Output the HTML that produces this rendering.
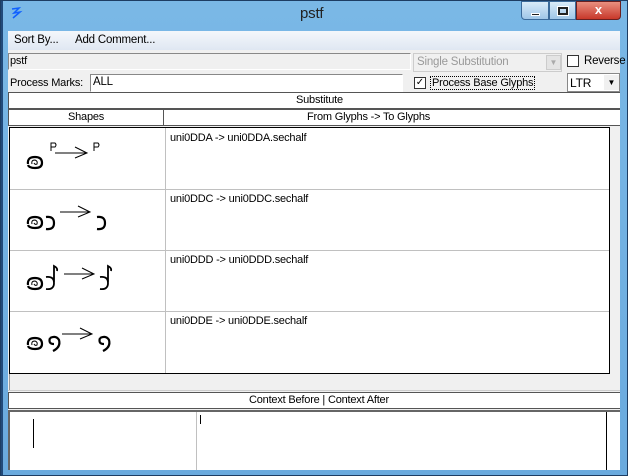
<!DOCTYPE html>
<html><head><meta charset="utf-8"><style>
*{margin:0;padding:0;box-sizing:border-box}
body{width:628px;height:476px;overflow:hidden;background:#6eaee0;font-family:"Liberation Sans",sans-serif;font-size:11px;color:#000;position:relative}
.a{position:absolute}
.t{white-space:nowrap;letter-spacing:-0.2px}
</style></head><body>
<div class="a" style="left:0;top:0;width:628px;height:476px;border:1px solid #1d3d63;background:linear-gradient(#7ab8e6,#6aaade)"></div>
<div class="a" style="left:1px;top:1px;width:2px;height:474px;background:#214a7a"></div>
<svg class="a" style="left:9px;top:6px" width="14" height="14"><path d="M3 3 L10 2 L5 7 L11 6 L4 12" stroke="#1060ff" stroke-width="1.5" fill="none"/></svg>
<div class="a t" style="left:300px;top:5px;font-size:15px;color:#222">pstf</div>
<div class="a" style="left:521px;top:1px;width:28px;height:19px;border:1px solid #3a6a9a;background:linear-gradient(#d9ebf8,#9fc6e8);border-radius:0 0 0 4px"><div class="a" style="left:9px;top:11px;width:9px;height:3px;background:#222;border:1px solid #fff"></div></div>
<div class="a" style="left:549px;top:1px;width:27px;height:19px;border:1px solid #3a6a9a;background:linear-gradient(#d9ebf8,#9fc6e8)"><div class="a" style="left:8px;top:5px;width:10px;height:8px;border:2px solid #222;outline:1px solid #fff"></div></div>
<div class="a" style="left:576px;top:1px;width:45px;height:19px;border:1px solid #6a2020;background:linear-gradient(#e89080,#c8382a);border-radius:0 0 4px 0;color:#fff;font-weight:bold;font-size:13px;text-align:center;line-height:16px">x</div>
<div class="a" style="left:8px;top:31px;width:612px;height:439px;background:#f0f0f0"></div>
<div class="a" style="left:8px;top:31px;width:612px;height:19px;background:linear-gradient(#f4f7fb,#dfe7f2)"></div>
<div class="a t" style="left:14px;top:34px;font-size:11.5px">Sort By...</div>
<div class="a t" style="left:75px;top:34px;font-size:11.5px">Add Comment...</div>
<div class="a" style="left:8px;top:53px;width:403px;height:17px;border:1px solid #888;border-right-color:#fff;border-bottom-color:#fff;background:#f0f0f0"></div>
<div class="a t" style="left:10px;top:55px">pstf</div>
<div class="a" style="left:413px;top:53px;width:149px;height:19px;border:1px solid #ccc;background:#f0f0f0"></div>
<div class="a t" style="left:417px;top:56px;font-size:11.5px;color:#999">Single Substitution</div>
<div class="a" style="left:546px;top:55px;width:15px;height:15px;background:#e4e4e4;border:1px solid #ccc;color:#aaa;font-size:8px;text-align:center;line-height:14px">▼</div>
<div class="a" style="left:567px;top:55px;width:12px;height:12px;border:1px solid #333;background:#fff"></div>
<div class="a t" style="left:584px;top:55px;font-size:11.5px">Reverse</div>
<div class="a t" style="left:10px;top:77px;font-size:11px">Process Marks:</div>
<div class="a" style="left:90px;top:74px;width:313px;height:18px;border:1px solid #888;border-right-color:#fff;border-bottom-color:#fff;background:#fff"></div>
<div class="a t" style="left:93px;top:76px;font-size:11.5px">ALL</div>
<div class="a" style="left:414px;top:77px;width:12px;height:12px;border:1px solid #333;background:#fff;font-size:10px;line-height:10px;text-align:center">✓</div>
<div class="a t" style="left:430px;top:76px;font-size:11px;border:1px dotted #000;padding:0 1px">Process Base Glyphs</div>
<div class="a" style="left:567px;top:73px;width:53px;height:19px;border:1px solid #888;background:#fff"></div>
<div class="a t" style="left:570px;top:76px;font-size:12px">LTR</div>
<div class="a" style="left:604px;top:75px;width:15px;height:15px;background:#f0f0f0;font-size:8px;text-align:center;line-height:15px">▼</div>
<div class="a" style="left:8px;top:92px;width:612px;height:17px;background:#fff;border:1px solid #555;border-right:none"></div>
<div class="a t" style="left:296px;top:94px">Substitute</div>
<div class="a" style="left:8px;top:109px;width:612px;height:17px;background:#fff;border:1px solid #555;border-right:none"></div>
<div class="a" style="left:163px;top:109px;width:1px;height:17px;background:#555"></div>
<div class="a t" style="left:68px;top:111px">Shapes</div>
<div class="a t" style="left:307px;top:111px">From Glyphs -&gt; To Glyphs</div>
<div class="a" style="left:9px;top:127px;width:601px;height:247px;background:#fff;border:1px solid #000"></div>
<div class="a" style="left:165px;top:128px;width:1px;height:245px;background:#c0c0c0"></div>
<div class="a" style="left:10px;top:189px;width:599px;height:1px;background:#c0c0c0"></div>
<div class="a" style="left:10px;top:250px;width:599px;height:1px;background:#c0c0c0"></div>
<div class="a" style="left:10px;top:311px;width:599px;height:1px;background:#c0c0c0"></div>
<div class="a t" style="left:170px;top:132px">uni0DDA -&gt; uni0DDA.sechalf</div>
<div class="a t" style="left:170px;top:193px">uni0DDC -&gt; uni0DDC.sechalf</div>
<div class="a t" style="left:170px;top:254px">uni0DDD -&gt; uni0DDD.sechalf</div>
<div class="a t" style="left:170px;top:315px">uni0DDE -&gt; uni0DDE.sechalf</div>
<svg class="a" style="left:20px;top:135px" width="100" height="230" fill="none" stroke="#000">
<defs><g id="s"><path d="M2 8 Q1 1 9 1 Q16 1 16 7 Q16 12 9 12 Q3 12 2 9" stroke-width="2.2"/><path d="M6 8 Q5 4 9 4 Q12 5 11 8 Q9 9 8 7" stroke-width="1"/></g></defs>
<use href="#s" x="6" y="21"/>
<path d="M31 16 V8 H35 Q37 10 35 12 H31" stroke-width="1"/>
<path d="M35 18 H67 M55 12 L67 18 L55 23" stroke-width="1"/>
<path d="M74 16 V8 H78 Q80 10 78 12 H74" stroke-width="1"/>
<use href="#s" x="6" y="81"/>
<path d="M26 82 Q34 81 34 88 Q34 95 26 94" stroke-width="2.2"/>
<path d="M40 77 H70 M58 71 L70 77 L58 82" stroke-width="1"/>
<path d="M77 82 Q85 81 85 88 Q85 95 77 94" stroke-width="2.2"/>
<use href="#s" x="6" y="142"/>
<path d="M26 142 Q34 141 34 148 Q34 155 26 154 M34 147 V131 Q38 133 37 136" stroke-width="1.8"/>
<path d="M44 139 H74 M62 133 L74 139 L62 144" stroke-width="1"/>
<path d="M80 142 Q88 141 88 148 Q88 155 80 154 M88 147 V131 Q92 133 91 136" stroke-width="1.8"/>
<use href="#s" x="6" y="202"/>
<path d="M30 203 Q36 200 39 205 Q41 212 33 216 M30 203 Q28 209 34 209" stroke-width="2.2"/>
<path d="M42 199 H72 M60 193 L72 199 L60 204" stroke-width="1"/>
<path d="M80 203 Q86 200 89 205 Q91 212 83 216 M80 203 Q78 209 84 209" stroke-width="2.2"/>
</svg>
<div class="a" style="left:9px;top:374px;width:1px;height:17px;background:#999"></div>
<div class="a" style="left:8px;top:390px;width:612px;height:1px;background:#ccc"></div>
<div class="a" style="left:8px;top:392px;width:612px;height:17px;background:#fff;border:1px solid #555;border-right:none"></div>
<div class="a t" style="left:249px;top:394px">Context Before | Context After</div>
<div class="a" style="left:8px;top:410px;width:612px;height:60px;background:#fff;border-top:2px solid #666;border-left:2px solid #666"></div>
<div class="a" style="left:606px;top:412px;width:1px;height:58px;background:#000"></div>
<div class="a" style="left:196px;top:412px;width:1px;height:58px;background:#c0c0c0"></div>
<div class="a" style="left:33px;top:419px;width:1px;height:29px;background:#000"></div>
<div class="a" style="left:200px;top:415px;width:1px;height:9px;background:#000"></div>
</body></html>
